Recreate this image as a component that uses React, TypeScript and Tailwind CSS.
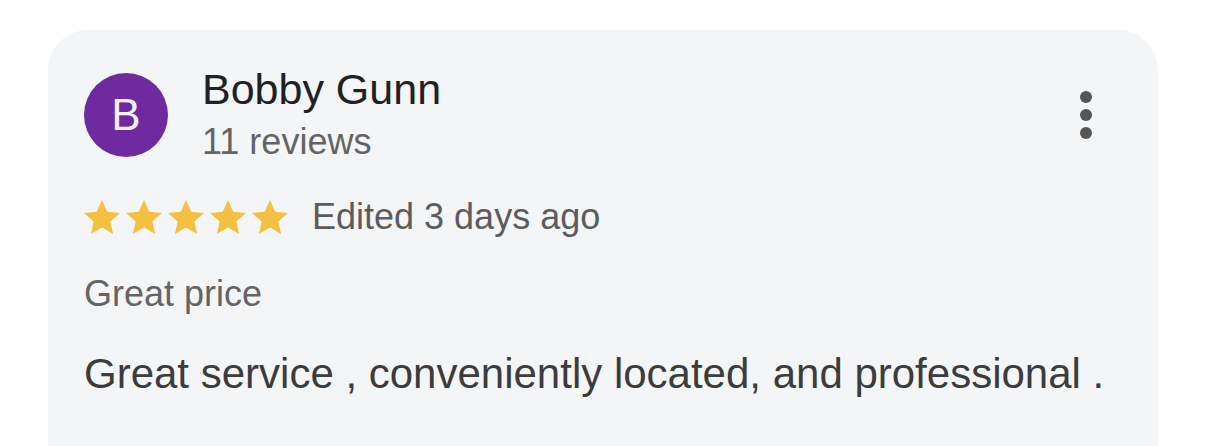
import React from 'react';

const Star = () => (
  <svg width="36" height="34" viewBox="1.45 1.6 21.1 19.96" className="shrink-0">
    <path
      fill="#f4c042"
      d="M12 1.6l3.05 6.9 7.5.72-5.65 4.98 1.66 7.36L12 17.73l-6.56 3.83 1.66-7.36L1.45 9.22l7.5-.72z"
    />
  </svg>
);

const App = () => {
  return (
    <div className="min-h-screen bg-white pt-[30px] pl-[48px] pr-[48px] font-['Liberation_Sans',Arial,sans-serif]">
      <div className="h-[416px] w-[1110px] rounded-t-[40px] bg-[#f4f5f7] pl-[36px] pr-[48px] pt-[35px]">
        <div className="flex items-center">
          <div className="flex h-[84px] w-[84px] shrink-0 items-center justify-center rounded-full bg-[#6e2a9e] text-[44px] text-[#f7f0fb]">
            B
          </div>
          <div className="ml-[34px] flex flex-col gap-[7px]">
            <div className="text-[43px] leading-[48px] text-[#202124]">Bobby Gunn</div>
            <div className="text-[36px] leading-[44px] text-[#646464]">11 reviews</div>
          </div>
          <button className="ml-auto flex h-[48px] w-[48px] flex-col items-center justify-center gap-[6px]">
            <span className="h-[12px] w-[12px] rounded-full bg-[#555555]" />
            <span className="h-[12px] w-[12px] rounded-full bg-[#555555]" />
            <span className="h-[12px] w-[12px] rounded-full bg-[#555555]" />
          </button>
        </div>

        <div className="mt-[31px] flex items-center">
          <div className="flex gap-[6px]">
            <Star />
            <Star />
            <Star />
            <Star />
            <Star />
          </div>
          <span className="ml-[24px] text-[36px] leading-[44px] text-[#5c5c5c]">Edited 3 days ago</span>
        </div>

        <div className="mt-[33px] text-[36px] leading-[44px] text-[#646464]">Great price</div>

        <p className="mt-[34px] text-[42px] leading-[48px] text-[#3c3c3c]">
          Great service , conveniently located, and professional .
        </p>
      </div>
    </div>
  );
};

export default App;
